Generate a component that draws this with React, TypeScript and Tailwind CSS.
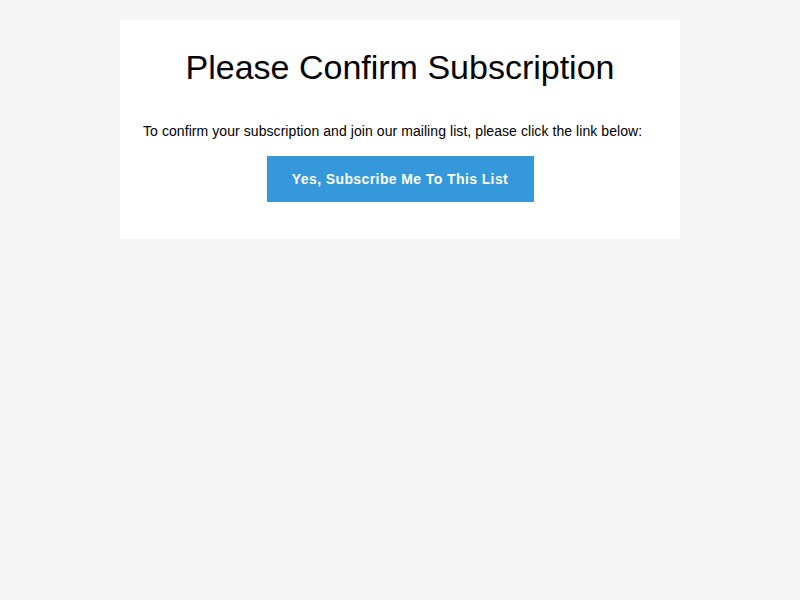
export default function App() {
  return (
    <div className="min-h-screen bg-[#f5f5f5] pt-5 font-['Liberation_Sans',Arial,sans-serif]">
      <div className="mx-auto w-[560px] bg-white px-5 pt-[26px] pb-[37px] text-center">
        <h1 className="text-[34px] leading-[42px] text-black">Please Confirm Subscription</h1>
        <p className="mt-[35px] pl-[3px] text-left text-[14px] leading-[16px] tracking-[0.07px] text-black">
          To confirm your subscription and join our mailing list, please click the link below:
        </p>
        <a
          href="#"
          className="mx-auto mt-[17px] flex h-[46px] w-[267px] items-center justify-center bg-[#3498db] text-[14px] font-bold tracking-[0.4px] text-white"
        >
          Yes, Subscribe Me To This List
        </a>
      </div>
    </div>
  );
}
